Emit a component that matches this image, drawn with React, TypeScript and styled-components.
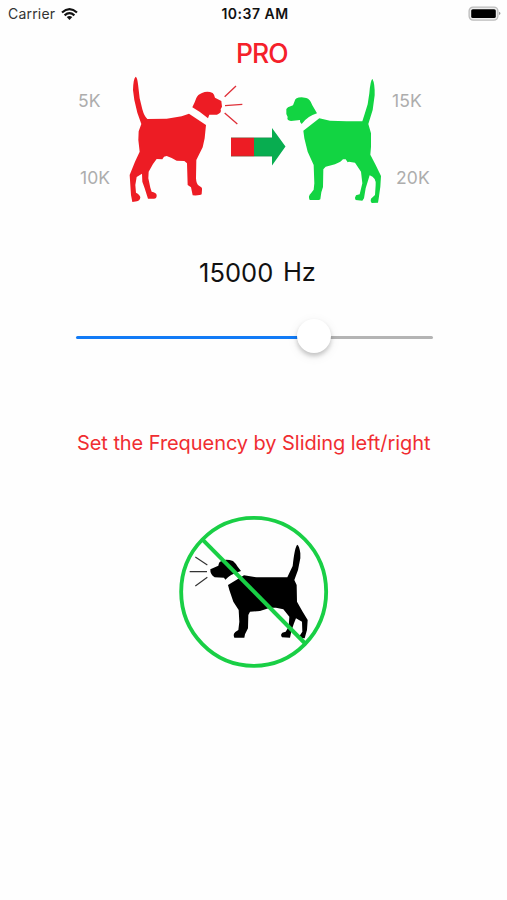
import React, { useState } from "react";
import styled, { createGlobalStyle } from "styled-components";

const GlobalStyle = createGlobalStyle`
  * { box-sizing: border-box; }
  body { margin: 0; background: #fefefe; }
`;

const Screen = styled.main`
  display: flex;
  flex-direction: column;
  width: 507px;
  height: 900px;
  overflow: hidden;
  background: #fefefe;
  color: #111;
  font-family: Inter, "Liberation Sans", sans-serif;
`;

const StatusBar = styled.header`
  display: grid;
  grid-template-columns: 1fr auto 1fr;
  align-items: center;
  height: 28px;
  padding: 0 5px 0 8px;
  line-height: 20px;
`;

const Carrier = styled.div`
  display: flex;
  align-items: center;
  gap: 6px;
  font-size: 14px;
  letter-spacing: 0.2px;
  color: #333;
`;

const Clock = styled.time`
  font-size: 14px;
  font-weight: 600;
  letter-spacing: 0.5px;
`;

const BatterySlot = styled.div`
  display: flex;
  justify-content: flex-end;
  padding-bottom: 1px;
`;

const Title = styled.h1`
  margin: 8px 0 0 236px;
  height: 34px;
  font-size: 26.5px;
  line-height: 34px;
  font-weight: 500;
  letter-spacing: -1px;
  color: #f5202a;
`;

const Comparison = styled.section`
  display: grid;
  grid-template-columns: 125px 260px 1fr;
  height: 140px;
`;

const Scale = styled.div<{ $side: "low" | "high" }>`
  display: flex;
  flex-direction: column;
  gap: 55px;
  padding-top: 20px;
  padding-left: ${({ $side }) => ($side === "low" ? 78 : 7)}px;
`;

const Mark = styled.span<{ $indent?: number }>`
  margin-left: ${({ $indent = 0 }) => $indent}px;
  font-size: 17.5px;
  line-height: 22px;
  letter-spacing: 0.1px;
  color: #adadad;
`;

const Drawing = styled.svg`
  display: block;
  overflow: visible;
`;

const Readout = styled.div`
  display: flex;
  gap: 8px;
  height: 32px;
  margin: 46px 0 0 199px;
  font-size: 25.5px;
  line-height: 32px;
`;

const Value = styled.span`
  width: 76px;
  padding-top: 1px;
  letter-spacing: 0.05px;
`;

const Unit = styled.span`
  letter-spacing: -0.3px;
`;

const Slider = styled.input<{ $fill: number }>`
  appearance: none;
  width: 357px;
  height: 36px;
  margin: 31px 0 0 76px;
  background: transparent;
  &::-webkit-slider-runnable-track {
    height: 3px;
    border-radius: 2px;
    background: linear-gradient(90deg, #127bf6 ${({ $fill }) => $fill}%, #b4b4b4 ${({ $fill }) => $fill}%);
  }
  &::-webkit-slider-thumb {
    appearance: none;
    width: 34px;
    height: 34px;
    margin-top: -17px;
    border-radius: 50%;
    background: #fff;
    box-shadow: 0 3px 4px rgba(0, 0, 0, 0.19), 0 3px 12px rgba(0, 0, 0, 0.08);
  }
`;

const Hint = styled.p`
  margin: 74px 0 0 77px;
  height: 28px;
  font-size: 20px;
  line-height: 28px;
  letter-spacing: -0.07px;
  white-space: nowrap;
  color: #f02d31;
`;

const SilenceButton = styled.button`
  width: 156px;
  height: 156px;
  margin: 57px 0 0 176px;
  padding: 0;
  border: 0;
  background: transparent;
`;

const RED_DOG =
  "M47 20Q52 23 54 42L59 85 67 118Q73 140 82 147L140 146 185 139 207 131 258 165 254 205 248 232 229 270 228 325Q229 344 237 347Q248 352 246 359L245 373Q240 377 218 376L213 352 203 345 201 280 193 273 170 272 155 264 140 258 132 260 127 268 110 267 99 282 86 305 85 325 91 353 95 365Q108 367 110 375Q111 387 100 386L84 386 74 355 67 335 66 311 50 321 46 345 48 368Q60 374 61 382Q60 393 51 394L37 396 33 375 29 315 45 275 59 245 55 210 56 184 64 162 52 128 43 90 39 60Q40 25 47 20Z";
const RED_HEAD =
  "M217 112L224 97 229 84Q233 74 246 69Q262 61 278 69L282 74 285 83 304 93 306 110 302 118Q306 129 291 134L268 134 264 145Q239 124 217 112Z";
const GREEN_DOG =
  "M292 26Q300 40 299 76L293 120 280 162 288 190 288 230 286 254 302 285 318 318 316 350 311 386 309 398 290 399Q285 393 288 386L300 375 302 345Q304 323 284 316L278 335 272 355 267 385 262 392 242 390Q238 383 243 376L254 373 262 340 258 305 240 278 222 275 218 277 212 268 204 268 196 275 180 283 152 290 145 298 144 351 139 367 136 388 132 390 104 390Q98 379 108 370L116 359 118 340 116 285 98 245 88 205 85 182 133 145 165 152 215 154 262 154 269 132 278 103 283 70Q286 32 292 26Z";
const GREEN_HEAD =
  "M34 117L39 112 54 106 59 93Q60 83 80 82L94 84Q105 86 112 106L126 130Q98 138 80 162Q73 157 75 150L48 153Q34 151 38 141L34 132Z";
const BLACK_DOG =
  "M382 119Q388 122 391 145L391 160 384 195 373 225 380 240 381 290 398 320 413 345 411 375 404 400 385 398 397 380 396 350 378 340 372 355 365 375 360 398 336 397Q330 389 337 383L347 380 356 365 358 335 340 313 318 308 300 308 270 318 240 320 235 330 234 370 225 388 223 398 193 398Q188 387 196 381L205 375 208 350 206 315 190 290 178 255 174 240 222 211 260 217 352 217 368 183Q374 126 382 119Z";
const BLACK_HEAD =
  "M121 193L145 182Q147 169 155 168Q167 161 189 168Q199 177 202 184L213 198Q182 207 166 224L162 218 134 217Q120 208 121 193Z";

function WifiIcon() {
  return (
    <Drawing width="17" height="13" viewBox="0 0 17 13" fill="none">
      <path d="M1 4.5Q8.5 -2.1 16 4.5M3.6 7.3Q8.5 3.1 13.4 7.3" stroke="#111" strokeWidth="2.2" />
      <path d="M5.7 9Q8.5 7.1 11.3 9L8.5 12Z" fill="#111" />
    </Drawing>
  );
}

function BatteryIcon() {
  return (
    <Drawing width="34" height="16" viewBox="0 0 34 16">
      <rect x="1.1" y="1.1" width="28.8" height="13" rx="4" fill="#eee" stroke="#bcbcbc" strokeWidth="1.3" />
      <rect x="3.2" y="3.2" width="24.6" height="8.8" rx="1.6" fill="#000" />
      <path d="M31 5.8Q34 7.4 31 9Z" fill="#999" />
    </Drawing>
  );
}

function BeforeAfter() {
  return (
    <Drawing width="260" height="140" viewBox="0 0 260 140">
      <g transform="translate(-5) scale(.33333)" fill="#ed1c24">
        <path d={RED_DOG} />
        <path d={RED_HEAD} />
        <path d="M314 80L348 48M315 107L367 103M314 129L352 162" stroke="#df3039" strokeWidth="4" fill="none" />
      </g>
      <path d="M106 67.7H129V86.3H106Z" fill="#ed1c24" />
      <path d="M129 67.7H147V58L160.5 76.5 147 95.5V86.3H129Z" fill="#08ad50" />
      <path d="M106 86.2H147M106 67.7H147" stroke="#286e3f" strokeWidth=".6" opacity=".6" />
      <g transform="translate(150) scale(.33333)" fill="#12d442">
        <path d={GREEN_DOG} />
        <path d={GREEN_HEAD} />
      </g>
    </Drawing>
  );
}

function NoBarking() {
  return (
    <Drawing width="156" height="156" viewBox="0 0 156 156">
      <g transform="translate(-6 -9) scale(.33333)">
        <path d={BLACK_DOG} />
        <path d={BLACK_HEAD} />
        <path d="M76 156L112 180M59 200H111M76 243L112 217" stroke="#333" strokeWidth="3.5" />
        <path d="M97 103L404 414" stroke="#19cf45" strokeWidth="12" />
        <ellipse cx="251" cy="260.5" rx="217.5" ry="222" fill="none" stroke="#19cf45" strokeWidth="11.5" />
      </g>
    </Drawing>
  );
}

const MIN_HZ = 4200;
const MAX_HZ = 20000;

export default function App() {
  const [frequency, setFrequency] = useState(15000);
  return (
    <>
      <GlobalStyle />
      <Screen>
        <StatusBar>
          <Carrier>Carrier<WifiIcon /></Carrier>
          <Clock>10:37 AM</Clock>
          <BatterySlot><BatteryIcon /></BatterySlot>
        </StatusBar>
        <Title>PRO</Title>
        <Comparison>
          <Scale $side="low"><Mark>5K</Mark><Mark $indent={2}>10K</Mark></Scale>
          <BeforeAfter />
          <Scale $side="high"><Mark>15K</Mark><Mark $indent={4}>20K</Mark></Scale>
        </Comparison>
        <Readout><Value>{frequency}</Value><Unit>Hz</Unit></Readout>
        <Slider
          type="range"
          aria-label="Frequency"
          min={MIN_HZ}
          max={MAX_HZ}
          step={100}
          value={frequency}
          $fill={((frequency - MIN_HZ) / (MAX_HZ - MIN_HZ)) * 100}
          onChange={(event) => setFrequency(Number(event.target.value))}
        />
        <Hint>Set the Frequency by Sliding left/right</Hint>
        <SilenceButton aria-label="Silence barking"><NoBarking /></SilenceButton>
      </Screen>
    </>
  );
}
